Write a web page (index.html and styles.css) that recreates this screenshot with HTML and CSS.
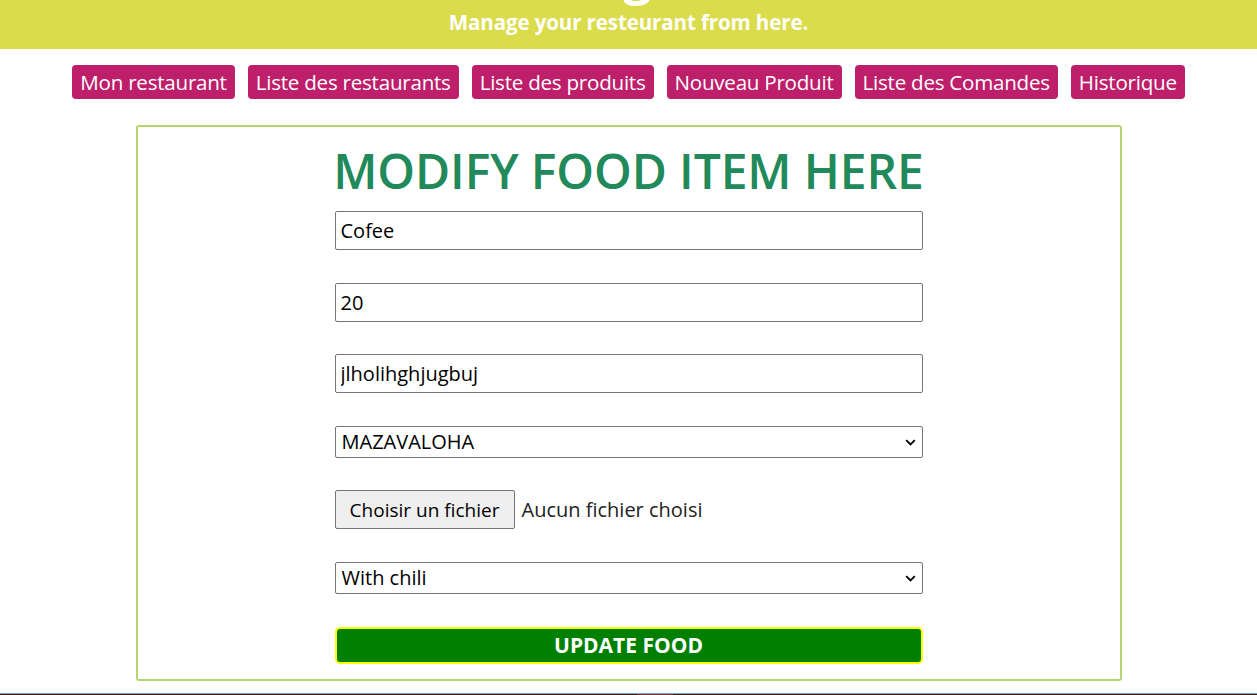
FILE: index.html
```html
<!DOCTYPE html>
<html lang="fr">
<head>
<meta charset="utf-8">
<title>Modify food item</title>
<link rel="stylesheet" href="styles.css">
</head>
<body>
<header class="top">
  <h1 class="top-title">Dining Hub</h1>
  <p class="top-sub">Manage your resteurant from here.</p>
</header>
<nav class="nav">
  <a class="nav-btn" href="#">Mon restaurant</a>
  <a class="nav-btn" href="#">Liste des restaurants</a>
  <a class="nav-btn" href="#">Liste des produits</a>
  <a class="nav-btn" href="#">Nouveau Produit</a>
  <a class="nav-btn" href="#">Liste des Comandes</a>
  <a class="nav-btn" href="#">Historique</a>
</nav>
<main class="card">
  <h2 class="card-title">MODIFY FOOD ITEM HERE</h2>
  <form class="form">
    <input class="field" type="text" value="Cofee">
    <input class="field" type="text" value="20">
    <input class="field" type="text" value="jlholihghjugbuj">
    <div class="select-wrap">
      <select class="select"><option>MAZAVALOHA</option></select>
      <svg class="chev" width="11" height="7" viewBox="0 0 11 7"><path d="M1.2 1.2 L5.5 5.5 L9.8 1.2" fill="none" stroke="#000" stroke-width="1.8"/></svg>
    </div>
    <div class="file">
      <button type="button" class="file-btn">Choisir un fichier</button>
      <span class="file-name">Aucun fichier choisi</span>
    </div>
    <div class="select-wrap">
      <select class="select"><option>With chili</option></select>
      <svg class="chev" width="11" height="7" viewBox="0 0 11 7"><path d="M1.2 1.2 L5.5 5.5 L9.8 1.2" fill="none" stroke="#000" stroke-width="1.8"/></svg>
    </div>
    <button type="submit" class="submit">UPDATE FOOD</button>
  </form>
</main>
<footer class="foot"><span class="foot-mark"></span></footer>
</body>
</html>
```
FILE: styles.css
```css
* { box-sizing: border-box; }
html, body { margin: 0; padding: 0; }
body {
  font-family: "Open Sans", "Noto Sans", sans-serif;
  background: #fff;
  color: #000;
  overflow: hidden;
}
.top {
  background: #dbdc4c;
  text-align: center;
  color: #fff;
  margin-top: -62px;
  padding-bottom: 18px;
}
.top-title {
  margin: 0;
  font-size: 50px;
  line-height: 75px;
  font-weight: 700;
}
.top-sub {
  margin: 0;
  font-size: 20.5px;
  font-weight: 700;
  line-height: 18px;
  letter-spacing: -0.1px;
}
.nav {
  display: flex;
  justify-content: center;
  gap: 13px;
  margin-top: 16px;
}
.nav-btn {
  background: #bd1f6a;
  color: #fff;
  text-decoration: none;
  font-size: 20.6px;
  line-height: 34px;
  height: 34px;
  padding: 0 8px;
  border-radius: 4px;
  letter-spacing: -0.25px;
}
.card {
  width: 986px;
  margin: 26px auto 0;
  border: 2px solid #b5d56e;
  border-radius: 3px;
  padding: 15px 0 15px;
}
.card-title {
  margin: 0 0 11px;
  text-align: center;
  color: #21895a;
  font-size: 48px;
  line-height: 58px;
  font-weight: 600;
  letter-spacing: -0.1px;
}
.form {
  width: 588px;
  margin: 0 auto;
  display: flex;
  flex-direction: column;
  gap: 32.6px;
}
.field {
  height: 39px;
  width: 100%;
  border: 1px solid #767676;
  border-radius: 2px;
  padding: 0 5px;
  font-family: inherit;
  font-size: 20px;
  color: #000;
  background: #fff;
}
.select-wrap {
  position: relative;
}
.select {
  appearance: none;
  -webkit-appearance: none;
  width: 100%;
  height: 32px;
  border: 1px solid #767676;
  border-radius: 2px;
  padding: 0 6px;
  font-family: inherit;
  font-size: 20px;
  background: #fff;
  color: #000;
}
.chev {
  position: absolute;
  right: 7px;
  top: 13px;
  pointer-events: none;
}
.file {
  display: flex;
  align-items: center;
  gap: 7px;
  height: 39px;
}
.file-btn {
  height: 39px;
  width: 180px;
  background: #efefef;
  border: 1px solid #767676;
  border-radius: 2px;
  font-family: inherit;
  font-size: 19px;
  color: #000;
  padding: 0;
}
.file-name {
  font-size: 20px;
  color: #222;
}
.submit {
  height: 37px;
  width: 100%;
  background: #008000;
  border: 2px solid #ffff00;
  border-radius: 5px;
  color: #fff;
  font-family: inherit;
  font-weight: 700;
  font-size: 21px;
  letter-spacing: 0;
  padding: 0;
}
.foot {
  margin-top: 12px;
  border-top: 1px solid #6aa6d8;
  background: #3b1c25;
  height: 40px;
  display: flex;
  justify-content: center;
}
.foot-mark {
  width: 36px;
  height: 40px;
  margin-left: 52px;
  background: #7a3047;
}
```
